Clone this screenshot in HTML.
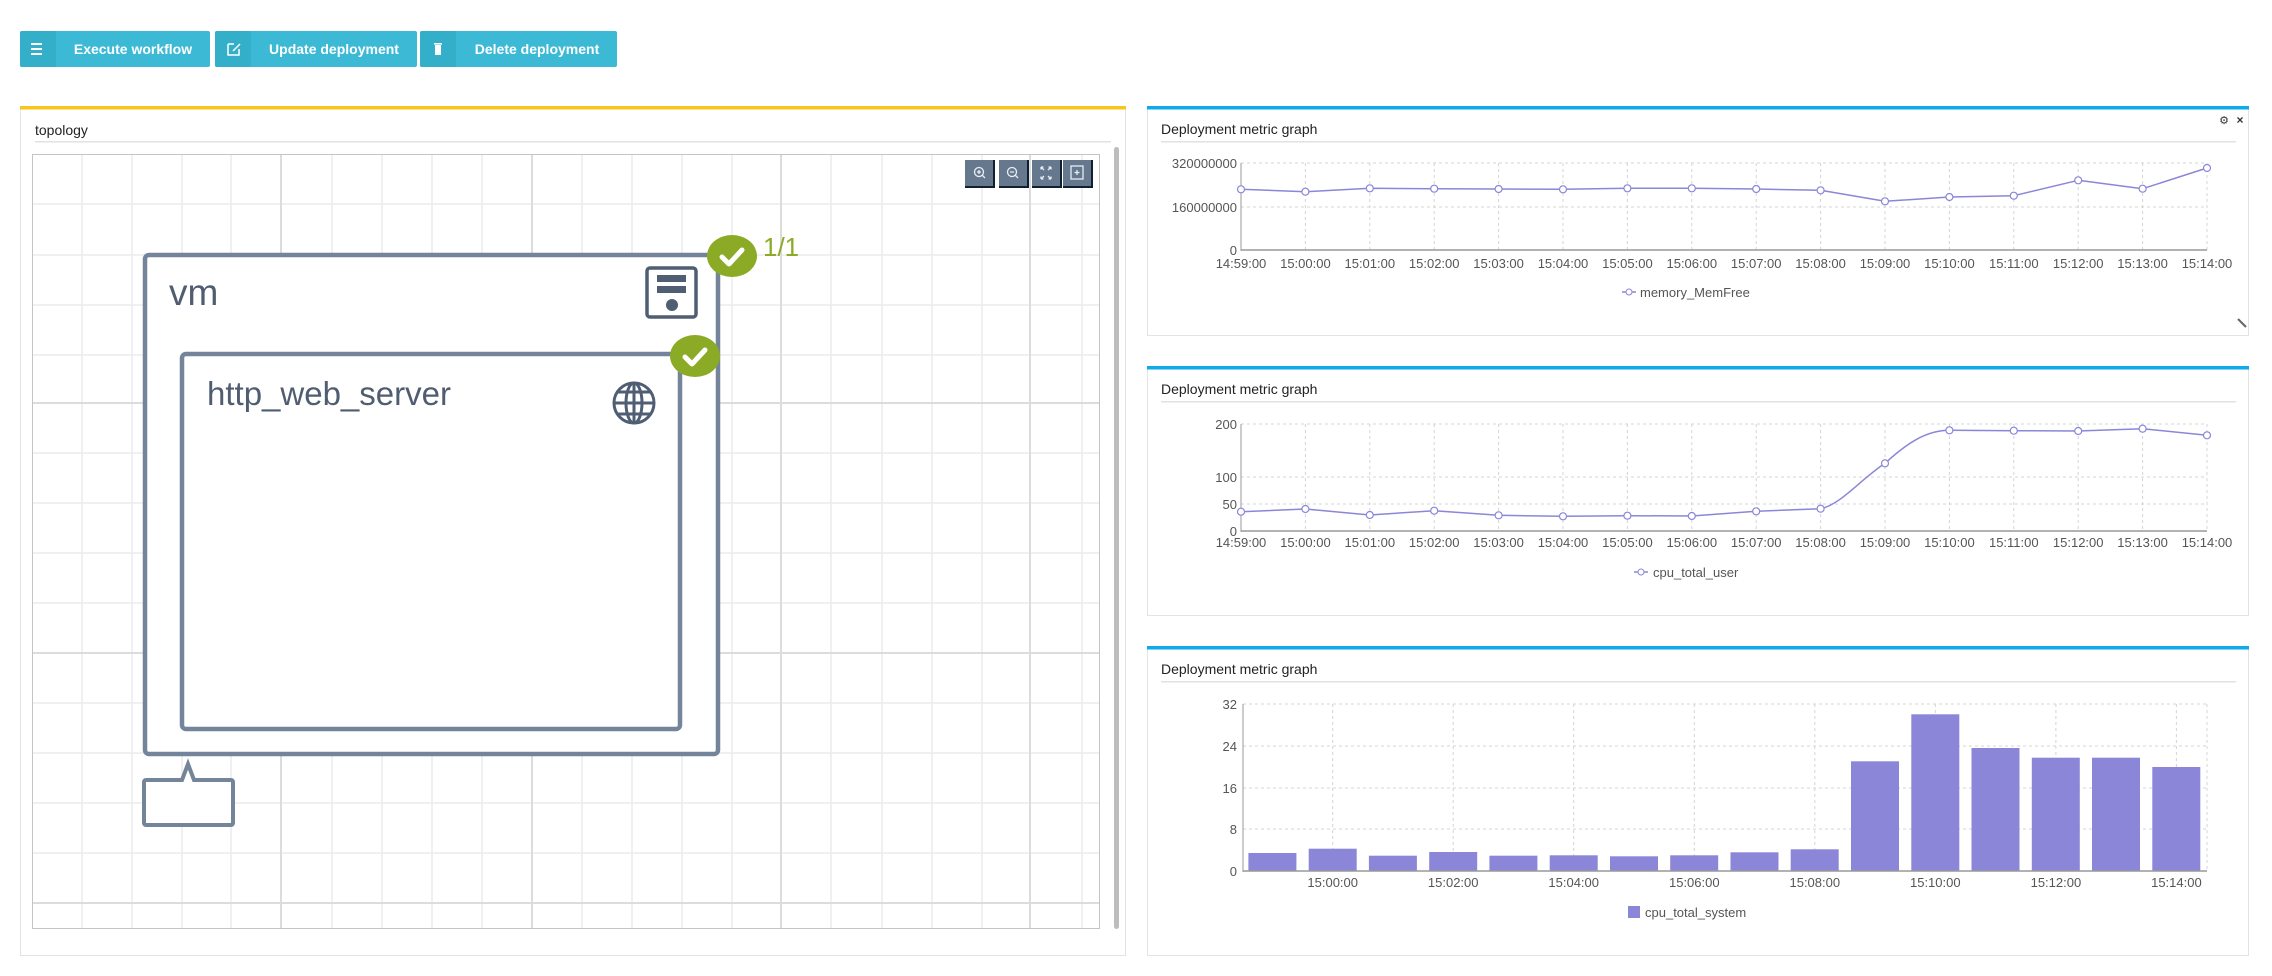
<!DOCTYPE html>
<html><head><meta charset="utf-8"><style>
html,body{margin:0;padding:0;background:#fff;}
body{width:2272px;height:976px;overflow:hidden;font-family:"Liberation Sans",sans-serif;}
svg{display:block}
</style></head><body>
<svg width="2272" height="976" viewBox="0 0 2272 976" xmlns="http://www.w3.org/2000/svg" font-family="Liberation Sans, sans-serif">
<rect width="2272" height="976" fill="#ffffff"/>
<!-- buttons -->
<g>
<rect x="20" y="31" width="190" height="36" rx="2" fill="#3cbad5"/>
<rect x="20" y="31" width="36" height="36" rx="2" fill="#33afca"/>
<rect x="31" y="43" width="11" height="2" fill="#fff"/><rect x="31" y="48" width="11" height="2" fill="#fff"/><rect x="31" y="53" width="11" height="2" fill="#fff"/>
<text x="133" y="54" text-anchor="middle" font-size="14" font-weight="bold" fill="#fff">Execute workflow</text>
<rect x="215" y="31" width="202" height="36" rx="2" fill="#3cbad5"/>
<rect x="215" y="31" width="36" height="36" rx="2" fill="#33afca"/>
<path d="M228 44h6M228 44v11h11v-6M233 51l7-7" stroke="#fff" stroke-width="1.5" fill="none"/>
<text x="334" y="54" text-anchor="middle" font-size="14" font-weight="bold" fill="#fff">Update deployment</text>
<rect x="420" y="31" width="197" height="36" rx="2" fill="#3cbad5"/>
<rect x="420" y="31" width="36" height="36" rx="2" fill="#33afca"/>
<rect x="434" y="43" width="8" height="1.6" fill="#fff"/><rect x="435" y="45" width="6" height="10" fill="#fff"/>
<text x="537" y="54" text-anchor="middle" font-size="14" font-weight="bold" fill="#fff">Delete deployment</text>
</g>

<!-- topology panel -->
<rect x="20.5" y="106.5" width="1105" height="849" fill="#fff" stroke="#e3e3e3"/>
<rect x="20" y="106" width="1106" height="3.5" fill="#f8c51c"/>
<text x="35" y="135" font-size="14" fill="#222">topology</text>
<rect x="35" y="141" width="1076" height="1.5" fill="#e2e2e2"/>
<rect x="32" y="154" width="1068" height="775" fill="#fff"/>
<g stroke="#ececec" stroke-width="1.5">
<line x1="82" y1="154" x2="82" y2="929"/><line x1="132" y1="154" x2="132" y2="929"/><line x1="182" y1="154" x2="182" y2="929"/><line x1="231" y1="154" x2="231" y2="929"/>
<line x1="332" y1="154" x2="332" y2="929"/><line x1="382" y1="154" x2="382" y2="929"/><line x1="432" y1="154" x2="432" y2="929"/><line x1="482" y1="154" x2="482" y2="929"/>
<line x1="582" y1="154" x2="582" y2="929"/><line x1="632" y1="154" x2="632" y2="929"/><line x1="682" y1="154" x2="682" y2="929"/><line x1="732" y1="154" x2="732" y2="929"/>
<line x1="831" y1="154" x2="831" y2="929"/><line x1="882" y1="154" x2="882" y2="929"/><line x1="932" y1="154" x2="932" y2="929"/><line x1="982" y1="154" x2="982" y2="929"/>
<line x1="1082" y1="154" x2="1082" y2="929"/>
<line x1="32" y1="204" x2="1100" y2="204"/><line x1="32" y1="255" x2="1100" y2="255"/><line x1="32" y1="305" x2="1100" y2="305"/><line x1="32" y1="355" x2="1100" y2="355"/>
<line x1="32" y1="453" x2="1100" y2="453"/><line x1="32" y1="503" x2="1100" y2="503"/><line x1="32" y1="553" x2="1100" y2="553"/><line x1="32" y1="603" x2="1100" y2="603"/>
<line x1="32" y1="703" x2="1100" y2="703"/><line x1="32" y1="753" x2="1100" y2="753"/><line x1="32" y1="803" x2="1100" y2="803"/><line x1="32" y1="853" x2="1100" y2="853"/>
</g>
<g stroke="#dcdcdc" stroke-width="2">
<line x1="281" y1="154" x2="281" y2="929"/><line x1="532" y1="154" x2="532" y2="929"/><line x1="781" y1="154" x2="781" y2="929"/><line x1="1030" y1="154" x2="1030" y2="929"/>
<line x1="32" y1="403" x2="1100" y2="403"/><line x1="32" y1="653" x2="1100" y2="653"/><line x1="32" y1="903" x2="1100" y2="903"/>
</g>
<rect x="32.5" y="154.5" width="1067" height="774" fill="none" stroke="#c4c4c4"/>
<rect x="1114" y="147" width="5" height="782" rx="2.5" fill="#bdbdbd"/>
<!-- zoom buttons -->
<g>
<rect x="965" y="160" width="30" height="28" fill="#112030"/><rect x="965" y="160" width="28" height="26" fill="#66788e"/>
<rect x="999" y="160" width="30" height="28" fill="#112030"/><rect x="999" y="160" width="28" height="26" fill="#66788e"/>
<rect x="1032" y="160" width="30" height="28" fill="#112030"/><rect x="1032" y="160" width="28" height="26" fill="#66788e"/>
<rect x="1063" y="160" width="30" height="28" fill="#112030"/><rect x="1063" y="160" width="28" height="26" fill="#66788e"/>
<g stroke="#e8eef4" stroke-width="1.3" fill="none">
<circle cx="979" cy="172" r="4.5"/><path d="M982 175l3 3M977 172h4M979 170v4"/>
<circle cx="1012" cy="172" r="4.5"/><path d="M1015 175l3 3M1010 172h4"/>
<path d="M1041 167l3 3M1041 167h2.5M1041 167v2.5M1051 167l-3 3M1051 167h-2.5M1051 167v2.5M1041 179l3-3M1041 179h2.5M1041 179v-2.5M1051 179l-3-3M1051 179h-2.5M1051 179v-2.5"/>
<rect x="1071" y="166" width="12" height="13"/><path d="M1077 170v5M1074.5 172.5h5"/>
</g></g>
<!-- vm node -->
<rect x="145" y="255" width="573" height="499" rx="4" fill="#fff" stroke="#74849a" stroke-width="4.5"/>
<text x="169" y="305" font-size="37" fill="#505d70">vm</text>
<rect x="647" y="268" width="49" height="49" rx="3" fill="none" stroke="#4f5e73" stroke-width="3.5"/>
<rect x="657" y="275" width="29" height="7" fill="#4f5e73"/><rect x="657" y="286" width="29" height="7" fill="#4f5e73"/>
<circle cx="672" cy="305" r="6" fill="#4f5e73"/>
<rect x="182" y="354" width="498" height="375" rx="4" fill="#fff" stroke="#74849a" stroke-width="4.5"/>
<text x="207" y="405" font-size="33" fill="#505d70">http_web_server</text>
<g stroke="#4f5e73" stroke-width="3" fill="none">
<circle cx="634" cy="403" r="20"/><ellipse cx="634" cy="403" rx="8" ry="20"/><line x1="634" y1="383" x2="634" y2="423"/>
<line x1="614" y1="403" x2="654" y2="403"/><path d="M618 392h32M618 414h32"/>
</g>
<ellipse cx="732" cy="256" rx="25" ry="21" fill="#8bab26"/>
<path d="M722 257l7 7 13-14" stroke="#fff" stroke-width="5" fill="none" stroke-linecap="round" stroke-linejoin="round"/>
<text x="763" y="256" font-size="26" fill="#8bab26">1/1</text>
<ellipse cx="695" cy="356" rx="25" ry="21" fill="#8bab26"/>
<path d="M685 357l7 7 13-14" stroke="#fff" stroke-width="5" fill="none" stroke-linecap="round" stroke-linejoin="round"/>
<path d="M146 780h36l6-16 6 16h37a2 2 0 0 1 2 2v41a2 2 0 0 1-2 2h-85a2 2 0 0 1-2-2v-41a2 2 0 0 1 2-2z" fill="#fff" stroke="#74849a" stroke-width="4"/>

<!-- right panels -->
<g font-size="13" fill="#555">
<rect x="1147.5" y="107.5" width="1101" height="228" fill="#fff" stroke="#e3e3e3"/>
<rect x="1147" y="106" width="1102" height="3.5" fill="#0eaae9"/>
<text x="1161" y="134" font-size="14" fill="#222">Deployment metric graph</text>
<rect x="1161" y="141" width="1075" height="1.5" fill="#e2e2e2"/>
<text x="2224" y="124" font-size="11" fill="#333" text-anchor="middle">⚙</text><text x="2240" y="124" font-size="12" fill="#333" font-weight="bold" text-anchor="middle">×</text>
<path d="M2238 319l8 8" stroke="#666" stroke-width="2"/>

<rect x="1147.5" y="367.5" width="1101" height="248" fill="#fff" stroke="#e3e3e3"/>
<rect x="1147" y="366" width="1102" height="3.5" fill="#0eaae9"/>
<text x="1161" y="394" font-size="14" fill="#222">Deployment metric graph</text>
<rect x="1161" y="401" width="1075" height="1.5" fill="#e2e2e2"/>

<rect x="1147.5" y="647.5" width="1101" height="308" fill="#fff" stroke="#e3e3e3"/>
<rect x="1147" y="646" width="1102" height="3.5" fill="#0eaae9"/>
<text x="1161" y="674" font-size="14" fill="#222">Deployment metric graph</text>
<rect x="1161" y="681" width="1075" height="1.5" fill="#e2e2e2"/>
</g>

<!-- chart 1 -->
<g stroke="#d4d4d4" stroke-dasharray="3,3" stroke-width="1">
<line x1="1241" y1="163" x2="2207" y2="163"/><line x1="1241" y1="207" x2="2207" y2="207"/>
<line x1="1305.4" y1="163" x2="1305.4" y2="250"/><line x1="1369.8" y1="163" x2="1369.8" y2="250"/><line x1="1434.2" y1="163" x2="1434.2" y2="250"/><line x1="1498.6" y1="163" x2="1498.6" y2="250"/><line x1="1563" y1="163" x2="1563" y2="250"/><line x1="1627.4" y1="163" x2="1627.4" y2="250"/><line x1="1691.8" y1="163" x2="1691.8" y2="250"/><line x1="1756.2" y1="163" x2="1756.2" y2="250"/><line x1="1820.6" y1="163" x2="1820.6" y2="250"/><line x1="1885" y1="163" x2="1885" y2="250"/><line x1="1949.4" y1="163" x2="1949.4" y2="250"/><line x1="2013.8" y1="163" x2="2013.8" y2="250"/><line x1="2078.2" y1="163" x2="2078.2" y2="250"/><line x1="2142.6" y1="163" x2="2142.6" y2="250"/><line x1="2207" y1="163" x2="2207" y2="250"/>
</g>
<line x1="1241" y1="163" x2="1241" y2="251" stroke="#999"/><line x1="1241" y1="250" x2="2207" y2="250" stroke="#999" stroke-width="1.5"/>
<g font-size="13" fill="#555" text-anchor="end"><text x="1237" y="168">320000000</text><text x="1237" y="212">160000000</text><text x="1237" y="255">0</text></g>
<g font-size="13" fill="#555" text-anchor="middle">
<text x="1241" y="268">14:59:00</text><text x="1305.4" y="268">15:00:00</text><text x="1369.8" y="268">15:01:00</text><text x="1434.2" y="268">15:02:00</text><text x="1498.6" y="268">15:03:00</text><text x="1563" y="268">15:04:00</text><text x="1627.4" y="268">15:05:00</text><text x="1691.8" y="268">15:06:00</text><text x="1756.2" y="268">15:07:00</text><text x="1820.6" y="268">15:08:00</text><text x="1885" y="268">15:09:00</text><text x="1949.4" y="268">15:10:00</text><text x="2013.8" y="268">15:11:00</text><text x="2078.2" y="268">15:12:00</text><text x="2142.6" y="268">15:13:00</text><text x="2207" y="268">15:14:00</text>
</g>
<polyline fill="none" stroke="#8b86d8" stroke-width="1.5" stroke-linejoin="round" points="1241,189.3 1305.4,191.7 1369.8,188.3 1434.2,188.7 1498.6,189 1563,189.3 1627.4,188.3 1691.8,188.3 1756.2,189 1820.6,190.3 1885,201.3 1949.4,197 2013.8,195.7 2078.2,180.3 2142.6,188.7 2207,168"/>
<g fill="#fff" stroke="#8b86d8" stroke-width="1.2">
<circle cx="1241" cy="189.3" r="3.5"/><circle cx="1305.4" cy="191.7" r="3.5"/><circle cx="1369.8" cy="188.3" r="3.5"/><circle cx="1434.2" cy="188.7" r="3.5"/><circle cx="1498.6" cy="189" r="3.5"/><circle cx="1563" cy="189.3" r="3.5"/><circle cx="1627.4" cy="188.3" r="3.5"/><circle cx="1691.8" cy="188.3" r="3.5"/><circle cx="1756.2" cy="189" r="3.5"/><circle cx="1820.6" cy="190.3" r="3.5"/><circle cx="1885" cy="201.3" r="3.5"/><circle cx="1949.4" cy="197" r="3.5"/><circle cx="2013.8" cy="195.7" r="3.5"/><circle cx="2078.2" cy="180.3" r="3.5"/><circle cx="2142.6" cy="188.7" r="3.5"/><circle cx="2207" cy="168" r="3.5"/>
</g>
<line x1="1622" y1="292" x2="1636" y2="292" stroke="#8b86d8" stroke-width="1.5"/><circle cx="1629" cy="292" r="3" fill="#fff" stroke="#8b86d8"/>
<text x="1640" y="297" font-size="13" fill="#555">memory_MemFree</text>

<!-- chart 2 -->
<g stroke="#d4d4d4" stroke-dasharray="3,3" stroke-width="1">
<line x1="1241" y1="424" x2="2207" y2="424"/><line x1="1241" y1="477" x2="2207" y2="477"/><line x1="1241" y1="504" x2="2207" y2="504"/>
<line x1="1305.4" y1="424" x2="1305.4" y2="531"/><line x1="1369.8" y1="424" x2="1369.8" y2="531"/><line x1="1434.2" y1="424" x2="1434.2" y2="531"/><line x1="1498.6" y1="424" x2="1498.6" y2="531"/><line x1="1563" y1="424" x2="1563" y2="531"/><line x1="1627.4" y1="424" x2="1627.4" y2="531"/><line x1="1691.8" y1="424" x2="1691.8" y2="531"/><line x1="1756.2" y1="424" x2="1756.2" y2="531"/><line x1="1820.6" y1="424" x2="1820.6" y2="531"/><line x1="1885" y1="424" x2="1885" y2="531"/><line x1="1949.4" y1="424" x2="1949.4" y2="531"/><line x1="2013.8" y1="424" x2="2013.8" y2="531"/><line x1="2078.2" y1="424" x2="2078.2" y2="531"/><line x1="2142.6" y1="424" x2="2142.6" y2="531"/><line x1="2207" y1="424" x2="2207" y2="531"/>
</g>
<line x1="1241" y1="424" x2="1241" y2="532" stroke="#999"/><line x1="1241" y1="531" x2="2207" y2="531" stroke="#999" stroke-width="1.5"/>
<g font-size="13" fill="#555" text-anchor="end"><text x="1237" y="429">200</text><text x="1237" y="482">100</text><text x="1237" y="509">50</text><text x="1237" y="536">0</text></g>
<g font-size="13" fill="#555" text-anchor="middle">
<text x="1241" y="547">14:59:00</text><text x="1305.4" y="547">15:00:00</text><text x="1369.8" y="547">15:01:00</text><text x="1434.2" y="547">15:02:00</text><text x="1498.6" y="547">15:03:00</text><text x="1563" y="547">15:04:00</text><text x="1627.4" y="547">15:05:00</text><text x="1691.8" y="547">15:06:00</text><text x="1756.2" y="547">15:07:00</text><text x="1820.6" y="547">15:08:00</text><text x="1885" y="547">15:09:00</text><text x="1949.4" y="547">15:10:00</text><text x="2013.8" y="547">15:11:00</text><text x="2078.2" y="547">15:12:00</text><text x="2142.6" y="547">15:13:00</text><text x="2207" y="547">15:14:00</text>
</g>
<path fill="none" stroke="#8b86d8" stroke-width="1.5" d="M1241 511.7L1305.4 509L1369.8 515L1434.2 510.7L1498.6 515.3L1563 516.3L1627.4 515.7L1691.8 516L1756.2 511.3L1820.6 508.7C1840 505 1860 480 1885 463.3C1905 445 1925 430.3 1949.4 430.3L2013.8 430.7L2078.2 431L2142.6 428.7L2207 435.3"/>
<g fill="#fff" stroke="#8b86d8" stroke-width="1.2">
<circle cx="1241" cy="511.7" r="3.5"/><circle cx="1305.4" cy="509" r="3.5"/><circle cx="1369.8" cy="515" r="3.5"/><circle cx="1434.2" cy="510.7" r="3.5"/><circle cx="1498.6" cy="515.3" r="3.5"/><circle cx="1563" cy="516.3" r="3.5"/><circle cx="1627.4" cy="515.7" r="3.5"/><circle cx="1691.8" cy="516" r="3.5"/><circle cx="1756.2" cy="511.3" r="3.5"/><circle cx="1820.6" cy="508.7" r="3.5"/><circle cx="1885" cy="463.3" r="3.5"/><circle cx="1949.4" cy="430.3" r="3.5"/><circle cx="2013.8" cy="430.7" r="3.5"/><circle cx="2078.2" cy="431" r="3.5"/><circle cx="2142.6" cy="428.7" r="3.5"/><circle cx="2207" cy="435.3" r="3.5"/>
</g>
<line x1="1634" y1="572" x2="1648" y2="572" stroke="#8b86d8" stroke-width="1.5"/><circle cx="1641" cy="572" r="3" fill="#fff" stroke="#8b86d8"/>
<text x="1653" y="577" font-size="13" fill="#555">cpu_total_user</text>

<!-- chart 3 -->
<g stroke="#d4d4d4" stroke-dasharray="3,3" stroke-width="1">
<line x1="1243" y1="704" x2="2207" y2="704"/><line x1="1243" y1="746" x2="2207" y2="746"/><line x1="1243" y1="788" x2="2207" y2="788"/><line x1="1243" y1="829" x2="2207" y2="829"/>
<line x1="1332.7" y1="704" x2="1332.7" y2="871"/><line x1="1453.2" y1="704" x2="1453.2" y2="871"/><line x1="1573.7" y1="704" x2="1573.7" y2="871"/><line x1="1694.3" y1="704" x2="1694.3" y2="871"/><line x1="1814.8" y1="704" x2="1814.8" y2="871"/><line x1="1935.3" y1="704" x2="1935.3" y2="871"/><line x1="2055.9" y1="704" x2="2055.9" y2="871"/><line x1="2176.4" y1="704" x2="2176.4" y2="871"/><line x1="2207" y1="704" x2="2207" y2="871"/>
</g>
<g fill="#8b86d8">
<rect x="1248.4" y="853" width="48" height="18"/><rect x="1308.7" y="848.7" width="48" height="22.3"/><rect x="1368.9" y="855.7" width="48" height="15.3"/><rect x="1429.2" y="852" width="48" height="19"/><rect x="1489.4" y="855.7" width="48" height="15.3"/><rect x="1549.7" y="855.3" width="48" height="15.7"/><rect x="1610" y="856.3" width="48" height="14.7"/><rect x="1670.2" y="855.3" width="48" height="15.7"/><rect x="1730.5" y="852.3" width="48" height="18.7"/><rect x="1790.7" y="849.3" width="48" height="21.7"/><rect x="1851" y="761.3" width="48" height="109.7"/><rect x="1911.3" y="714.3" width="48" height="156.7"/><rect x="1971.5" y="748" width="48" height="123"/><rect x="2031.8" y="757.7" width="48" height="113.3"/><rect x="2092" y="757.7" width="48" height="113.3"/><rect x="2152.3" y="767" width="48" height="104"/>
</g>
<line x1="1243" y1="704" x2="1243" y2="872" stroke="#999"/><line x1="1243" y1="871" x2="2207" y2="871" stroke="#999" stroke-width="1.5"/>
<g font-size="13" fill="#555" text-anchor="end"><text x="1237" y="709">32</text><text x="1237" y="751">24</text><text x="1237" y="793">16</text><text x="1237" y="834">8</text><text x="1237" y="876">0</text></g>
<g font-size="13" fill="#555" text-anchor="middle">
<text x="1332.7" y="887">15:00:00</text><text x="1453.2" y="887">15:02:00</text><text x="1573.7" y="887">15:04:00</text><text x="1694.3" y="887">15:06:00</text><text x="1814.8" y="887">15:08:00</text><text x="1935.3" y="887">15:10:00</text><text x="2055.9" y="887">15:12:00</text><text x="2176.4" y="887">15:14:00</text>
</g>
<rect x="1628" y="906" width="12" height="12" fill="#8b86d8"/>
<text x="1645" y="917" font-size="13" fill="#555">cpu_total_system</text>
</svg>
</body></html>
